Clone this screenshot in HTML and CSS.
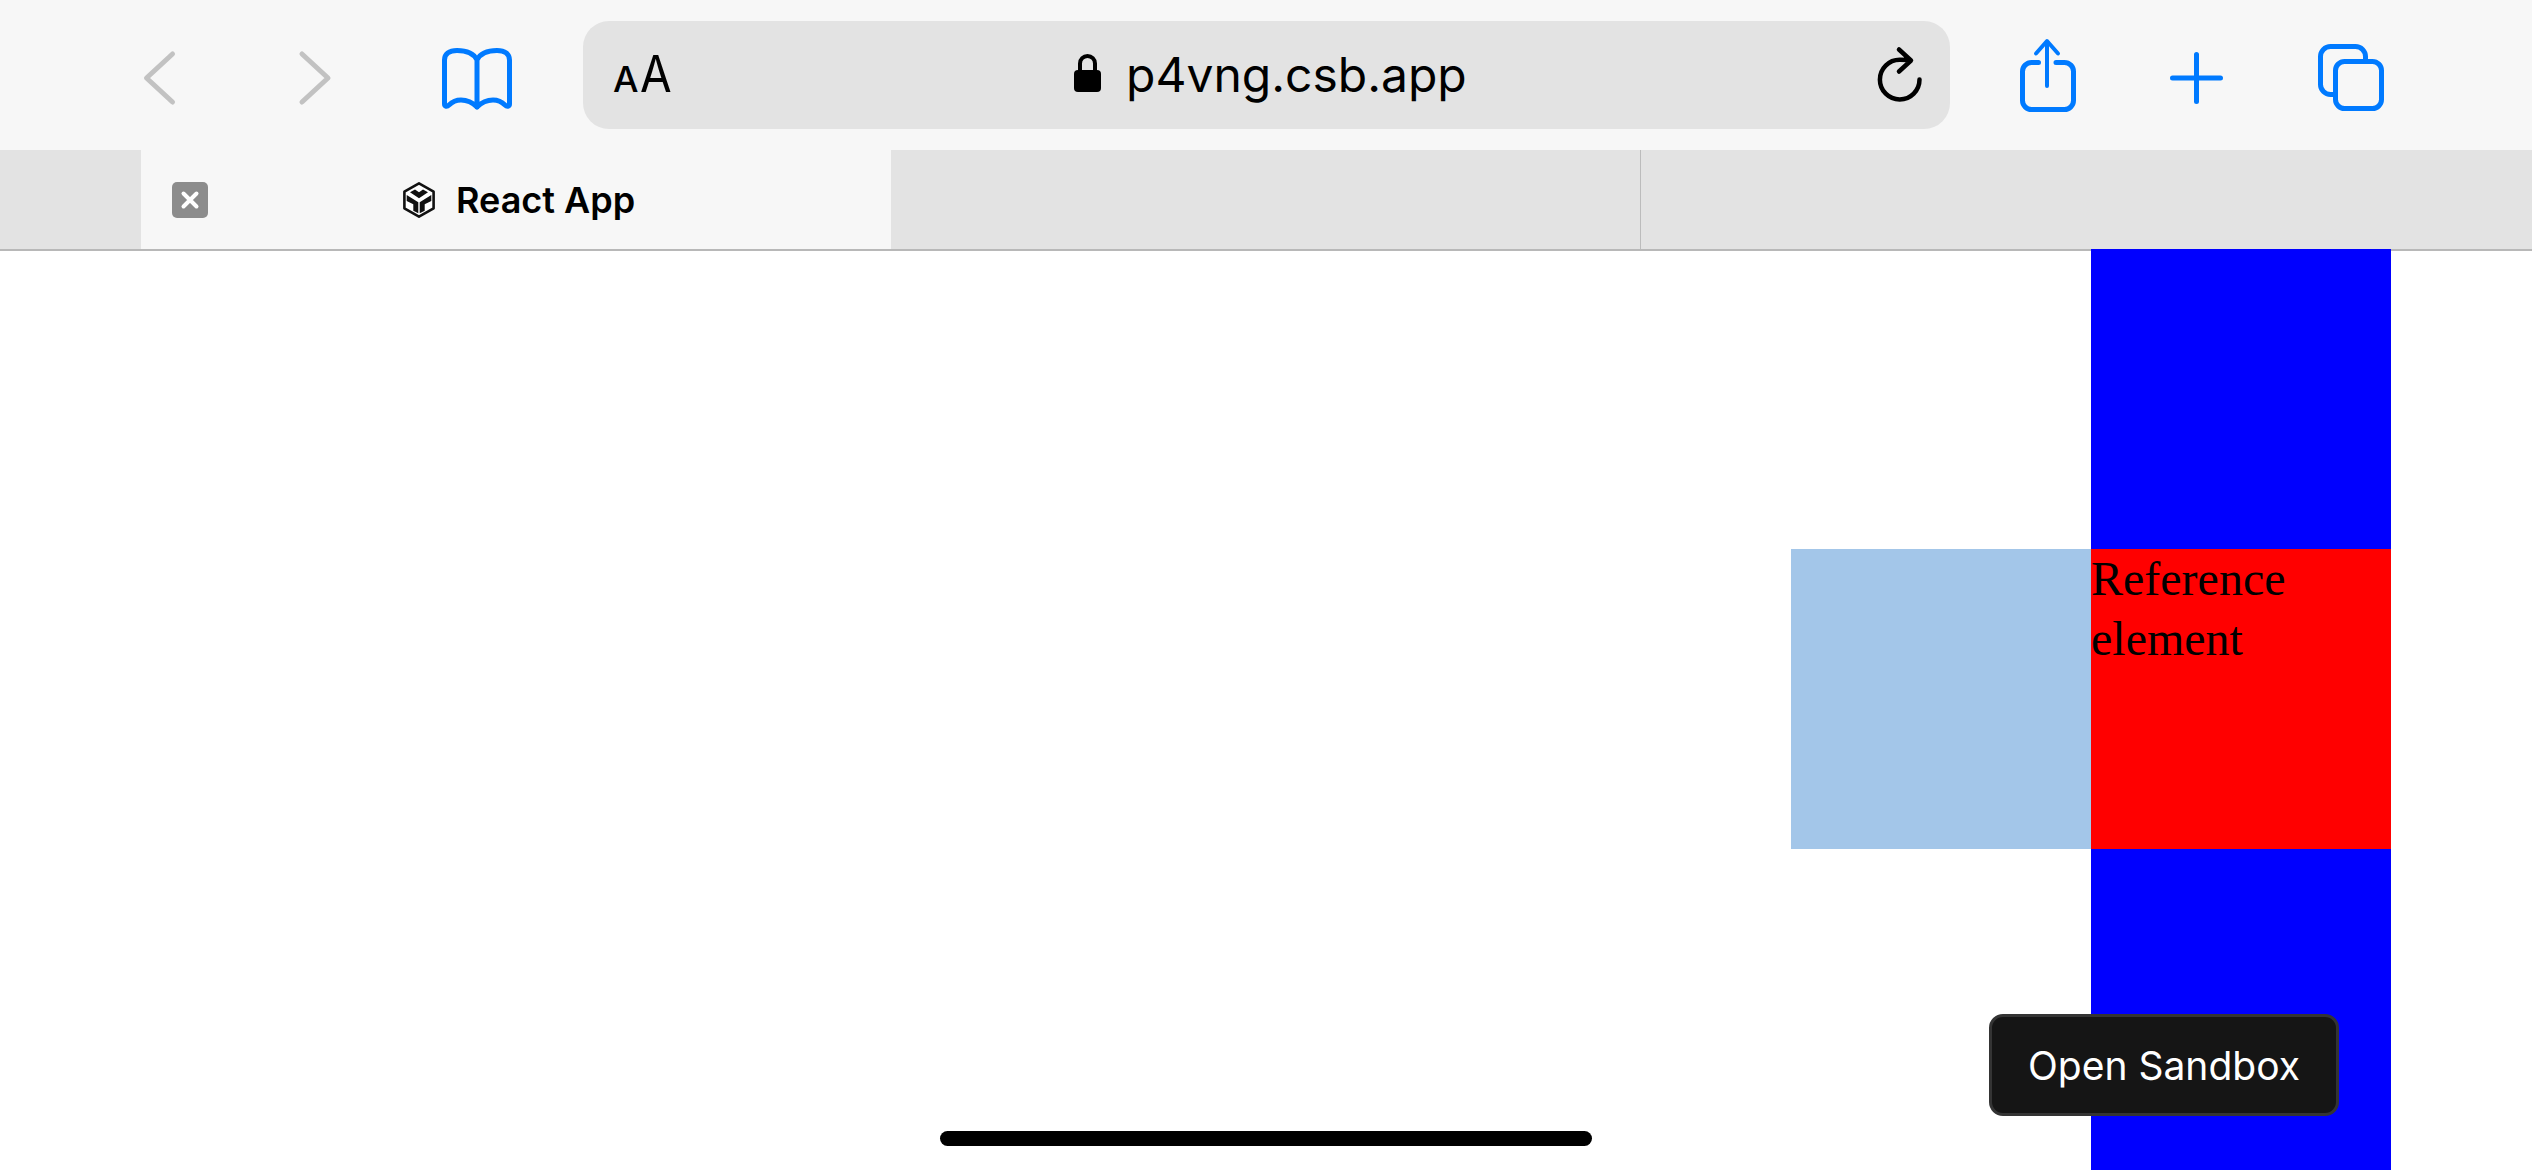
FILE: index.html
```html
<!DOCTYPE html>
<html lang="en">
<head>
<meta charset="utf-8">
<title>React App</title>
<link rel="stylesheet" href="styles.css">
</head>
<body>
<header class="toolbar">
  <svg class="ico back" width="40" height="150" viewBox="0 0 40 150"><path class="st-grey" d="M32.5 54 L6.5 78 L32.5 102"/></svg>
  <svg class="ico forward" width="40" height="150" viewBox="0 0 40 150"><path class="st-grey" d="M7 54 L33 78 L7 102"/></svg>
  <svg class="ico book" width="82" height="150" viewBox="0 0 82 150"><path class="st-blue" d="M41 60 C38 54 31 50.5 21 50.5 C13 50.5 8.5 54 8.5 60 V104 C8.5 106.5 11 107 13 105 C16 102 20 100 25 100 C32 100 37 103 41 107 C45 103 50 100 57 100 C62 100 66 102 69 105 C71 107 73.5 106.5 73.5 104 V60 C73.5 54 69 50.5 61 50.5 C51 50.5 44 54 41 60 Z M41 60 V107"/></svg>
  <div class="urlbar">
    <span class="aa"><span class="aa-small">A</span><span class="aa-big">A</span></span>
    <span class="address">
      <svg class="lock" width="27" height="38" viewBox="0 0 27 38"><rect y="16" width="27" height="22" rx="4"/><path d="M6 17 V9.5 a7.5 7.5 0 0 1 15 0 V17"/></svg>
      <span class="url">p4vng.csb.app</span>
    </span>
    <svg class="reload" width="48" height="108" viewBox="0 21 48 108"><path d="M43.5 79.5 A19.8 19.8 0 1 1 23.7 59.8 L33 60 M23 49.5 L35 60.5 L23 71.5"/></svg>
  </div>
  <svg class="ico share" width="66" height="150" viewBox="0 0 66 150"><path class="st-blue" d="M23.5 62.5 H16.5 A9 9 0 0 0 7.5 71.5 V100.5 A9 9 0 0 0 16.5 109.5 H49.5 A9 9 0 0 0 58.5 100.5 V71.5 A9 9 0 0 0 49.5 62.5 H41"/><path class="st-blue thin" d="M32 86 V42 M21 53.5 L32 41 L43 53.5"/></svg>
  <svg class="ico plus" width="63" height="150" viewBox="0 0 63 150"><path class="st-blue" d="M7.5 78 H55.5 M31.5 54.5 V101.5"/></svg>
  <svg class="ico tabs" width="78" height="150" viewBox="0 0 78 150"><path class="st-blue" d="M23.5 94.5 H18.5 A10 10 0 0 1 8.5 84.5 V56.5 A10 10 0 0 1 18.5 46.5 H43.5 A10 10 0 0 1 53.5 56.5 V61.5"/><rect class="st-blue" x="23.5" y="61.5" width="46" height="47" rx="9"/></svg>
</header>
<nav class="tabbar">
  <div class="tab-gutter"></div>
  <div class="tab tab-active">
    <svg class="tab-close" width="36" height="36" viewBox="0 0 36 36"><rect width="36" height="36" rx="5" fill="#8c8c8c"/><path d="M11.5 11.5 L24.5 24.5 M24.5 11.5 L11.5 24.5" stroke="#fff" stroke-width="4" stroke-linecap="round"/></svg>
    <svg class="favicon" width="32" height="36" viewBox="0 0 32 36"><path d="M16 1.4 L30.6 9.7 V26.3 L16 34.6 L1.4 26.3 V9.7 Z" fill="#fff" stroke="#111" stroke-width="2.6" stroke-linejoin="round"/><path fill="#111" d="M7 10.3 L12 7.5 L16 10.3 L20 7.5 L25 10.3 L16 16.3 Z M3.7 13 L15.3 20.3 V31.3 L10.3 28.7 V22.3 L3.7 19 Z M28.3 13 L16.7 20.3 V31.3 L21.7 28.7 V22.3 L28.3 19 Z"/></svg>
    <span class="tab-title">React App</span>
  </div>
  <div class="tab tab-idle"></div>
  <div class="tab-rest"></div>
</nav>
<main class="content">
  <div class="column">
    <div class="reference">
      Reference element
      <div class="floating"></div>
    </div>
  </div>
  <div class="open-sandbox">Open Sandbox</div>
  <div class="home-indicator"></div>
</main>
</body>
</html>
```
FILE: styles.css
```css
* { box-sizing: border-box; }
html, body { margin: 0; height: 100%; }
body {
  width: 2532px;
  height: 1170px;
  display: flex;
  flex-direction: column;
  overflow: hidden;
  background: #fff;
  font-family: Inter, "Liberation Sans", sans-serif;
  color: #000;
}

/* toolbar */
.toolbar {
  height: 150px;
  flex: none;
  display: flex;
  align-items: flex-start;
  padding-left: 140px;
  background: #f7f7f7;
}
.ico { flex: none; display: block; }
.forward { margin-left: 115px; }
.book { margin-left: 101px; }
.share { margin-left: 65px; }
.plus { margin-left: 84px; }
.tabs { margin-left: 84px; }
.st-grey, .st-blue {
  fill: none;
  stroke-width: 5;
  stroke-linecap: round;
  stroke-linejoin: round;
}
.st-grey { stroke: #c2c2c2; }
.st-blue { stroke: #007aff; }
.st-blue.thin { stroke-width: 4; }

/* address bar */
.urlbar {
  width: 1367px;
  height: 108px;
  margin: 21px 0 0 65px;
  flex: none;
  display: flex;
  align-items: center;
  padding: 0 26px 0 30px;
  background: #e3e3e3;
  border-radius: 26px;
}
.aa {
  display: flex;
  align-items: baseline;
  padding-top: 3px;
  font-size: 51px;
  line-height: 108px;
  white-space: nowrap;
}
.aa-small { font-size: 36px; font-weight: 500; }
.aa-big {
  display: block;
  margin-left: 1px;
  transform: scaleX(.9);
  transform-origin: left;
}
.address {
  margin-left: auto;
  margin-right: 10px;
  display: flex;
  align-items: center;
  gap: 25px;
}
.lock { display: block; margin-top: -4px; }
.lock rect { fill: #000; }
.lock path { fill: none; stroke: #000; stroke-width: 4; }
.url { font-size: 48px; line-height: 108px; white-space: nowrap; }
.reload { display: block; margin-left: auto; flex: none; }
.reload path {
  fill: none;
  stroke: #000;
  stroke-width: 4.5;
  stroke-linecap: round;
  stroke-linejoin: round;
}

/* tabs */
.tabbar {
  height: 99px;
  flex: none;
  display: flex;
  background: #e3e3e3;
}
.tab-gutter { width: 141px; flex: none; }
.tab { flex: none; }
.tab-active {
  width: 750px;
  display: flex;
  align-items: center;
  padding-left: 31px;
  background: #f7f7f7;
}
.tab-close { display: block; flex: none; }
.favicon { display: block; flex: none; margin-left: 195px; }
.tab-title {
  margin-left: 21px;
  font-size: 36px;
  font-weight: 600;
  white-space: nowrap;
}
.tab-idle { width: 750px; border-right: 1px solid #bcbcbc; }
.tab-rest { flex: 1; }

/* page */
.content {
  position: relative;
  flex: 1;
  display: flex;
  justify-content: flex-end;
  padding-right: 141px;
  background: #fff;
  box-shadow: inset 0 2px 0 #b8b8b8;
}
.column { width: 300px; background: #00f; padding-top: 300px; }
.reference {
  position: relative;
  height: 300px;
  background: #f00;
  font-family: "Liberation Serif", "Times New Roman", serif;
  font-size: 48px;
  line-height: 60px;
  color: #000;
}
.floating {
  position: absolute;
  top: 0;
  right: 100%;
  width: 300px;
  height: 300px;
  background: #a3c6e9;
}
.open-sandbox {
  position: absolute;
  left: 1989px;
  top: 765px;
  width: 350px;
  height: 102px;
  display: flex;
  align-items: center;
  justify-content: center;
  background: #151515;
  border: 3px solid #343434;
  border-radius: 14px;
  color: #fff;
  font-size: 39px;
}
.home-indicator {
  position: absolute;
  left: 940px;
  top: 882px;
  width: 652px;
  height: 15px;
  border-radius: 8px;
  background: #000;
}
```
